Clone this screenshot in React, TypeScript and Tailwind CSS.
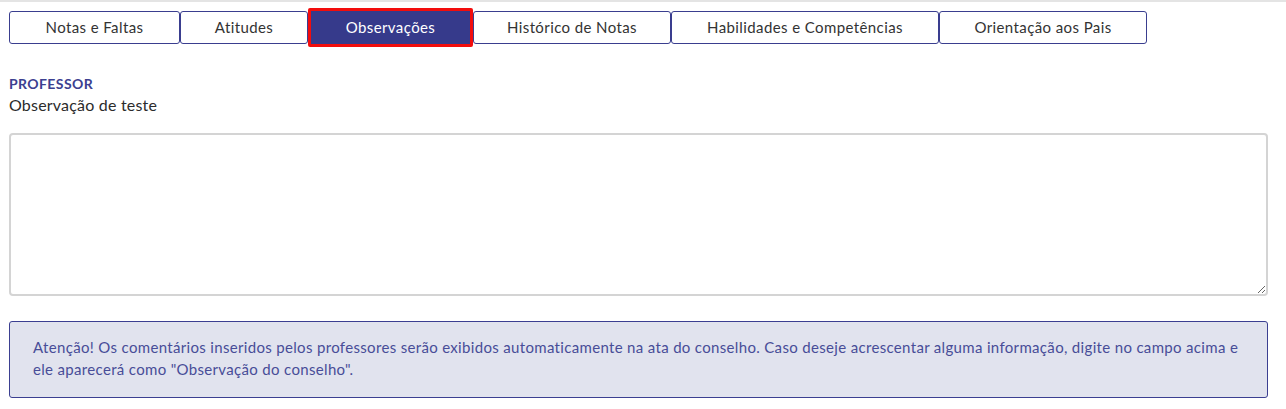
const tabs = [
  { label: "Notas e Faltas", w: "w-[171px]" },
  { label: "Atitudes", w: "w-[128px]" },
  { label: "Observações", w: "w-[165px]", active: true },
  { label: "Histórico de Notas", w: "w-[198px]" },
  { label: "Habilidades e Competências", w: "w-[268px]" },
  { label: "Orientação aos Pais", w: "w-[208px]" },
];

export default function App() {
  return (
    <div className="min-h-[409px] bg-white border-t-2 border-[#e4e4e4] font-['Lato','Noto_Sans',sans-serif] text-[15px] text-[#333]">
      {/* Tabs */}
      <div className="flex items-center h-[50px] pl-[9px] tracking-[0.4px]">
        {tabs.map((t) =>
          t.active ? (
            <button
              key={t.label}
              className={`${t.w} h-[39px] border-[3px] border-[#f20d0d] bg-[#363a8b] text-white rounded-[2px]`}
            >
              {t.label}
            </button>
          ) : (
            <button
              key={t.label}
              className={`${t.w} h-[33px] border border-[#3a3e8f] bg-white text-[#333] rounded-[3px]`}
            >
              {t.label}
            </button>
          )
        )}
      </div>

      <div className="px-[9px] pr-[18px]">
        {/* Professor */}
        <div className="mt-[22px] text-[14px] font-bold text-[#3c4090] leading-[20px] tracking-[0.4px]">PROFESSOR</div>
        <div className="leading-[22px] text-[16px] text-[#2b2b2b] tracking-[0.2px]">Observação de teste</div>

        <textarea className="mt-[17px] block w-full h-[163px] border-2 border-[#d4d4d4] rounded-[4px] resize-y outline-none" />

        {/* Aviso */}
        <div className="mt-[25px] bg-[#e1e3ee] border border-[#3b3f91] rounded-[3px] pl-[23px] pr-[16px] pt-[14px] pb-[17px] text-[#484d98] leading-[22px] tracking-[0.33px]">
          Atenção! Os comentários inseridos pelos professores serão exibidos automaticamente na ata do conselho. Caso
          deseje acrescentar alguma informação, digite no campo acima e
          <br />
          ele aparecerá como "Observação do conselho".
        </div>
      </div>
    </div>
  );
}
